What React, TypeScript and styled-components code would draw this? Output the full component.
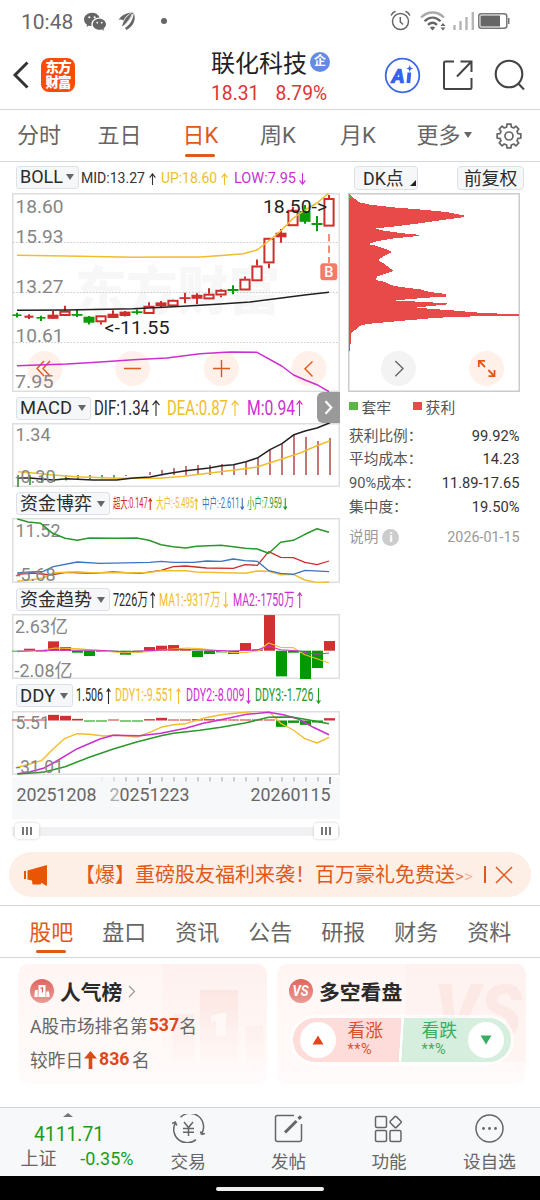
import React, { useLayoutEffect, useRef, useState } from 'react';
import styled, { createGlobalStyle, css } from 'styled-components';
import { BsWechat } from 'react-icons/bs';

const FONT = '"Roboto", "Noto Sans CJK SC", sans-serif';
const ORANGE = '#e0591a';
const RED = '#cf2e2e';
const GREEN = '#0a9a0a';
const YELLOW = '#f0bd2c';
const MAGENTA = '#cb2fd0';
const BLUE = '#3c74c0';
const INK = '#2a2a2a';

const Global = createGlobalStyle`
  * { box-sizing: border-box; }
  body { margin: 0; background: #fff; font-family: ${FONT}; color: #333; }
  svg { display: block; flex: none; }
`;

/* ---------- shared ---------- */

const FitBox = styled.span<{ $w: number }>`
  display: inline-block;
  flex: none;
  width: ${p => p.$w}px;
  white-space: nowrap;
`;
const FitInner = styled.span`
  display: inline-block;
  transform-origin: 0 50%;
`;

function Fit({ w, children }: { w: number; children: React.ReactNode }) {
  const ref = useRef<HTMLSpanElement>(null);
  const [k, setK] = useState(1);
  useLayoutEffect(() => {
    if (ref.current) setK(w / ref.current.getBoundingClientRect().width);
  }, []);
  return (
    <FitBox $w={w}>
      <FitInner ref={ref} style={{ transform: `scaleX(${k})` }}>{children}</FitInner>
    </FitBox>
  );
}

const Page = styled.div`
  width: 540px;
  height: 1200px;
  overflow: hidden;
  display: flex;
  flex-direction: column;
  background: #fff;
`;

/* ---------- status bar ---------- */

const StatusBar = styled.div`
  height: 41px;
  flex: none;
  display: flex;
  align-items: center;
  padding: 0 30px 0 21px;
  color: #666;
`;
const Clock = styled.span`
  font-size: 21px;
  line-height: 24px;
  margin: 3px 11px 0 0;
`;
const StatusIcons = styled.div`
  margin-left: auto;
  display: flex;
  align-items: center;
`;
const Dot = styled.span`
  width: 6px;
  height: 6px;
  border-radius: 50%;
  background: #666;
  margin-left: 25px;
`;

/* ---------- header ---------- */

const Header = styled.header`
  height: 69px;
  flex: none;
  display: flex;
  border-bottom: 1px solid #d3d6d8;
  padding-left: 12px;
`;
const HeaderLeft = styled.div`
  width: 199px;
  display: flex;
  align-items: center;
`;
const Logo = styled.div`
  width: 34px;
  height: 34px;
  margin-left: 12px;
  border-radius: 8px;
  background: #fb4b0a;
  color: #fff;
  font: 900 13.5px/15px ${FONT};
  display: flex;
  flex-direction: column;
  align-items: center;
  justify-content: center;
  letter-spacing: -1px;
`;
const TitleBlock = styled.div`
  width: 172px;
  padding-top: 3px;
`;
const TitleRow = styled.div`
  display: flex;
  align-items: center;
  height: 34px;
  font-size: 24px;
  color: #222;
`;
const CorpBadge = styled.span`
  width: 20px;
  height: 20px;
  border-radius: 50%;
  margin: 2px 0 0 3px;
  background: #648be3;
  color: #fff;
  font-size: 12px;
  font-weight: 700;
  line-height: 19px;
  text-align: center;
`;
const PriceRow = styled.div`
  display: flex;
  gap: 16px;
  font-size: 19.3px;
  line-height: 24px;
  color: #dc3535;
  margin-top: 4px;
`;
const HeaderActions = styled.div`
  display: flex;
  align-items: center;
`;
const Spacer = styled.span<{ $w: number }>`
  flex: none;
  width: ${p => p.$w}px;
`;

/* ---------- period tabs ---------- */

const PeriodTabs = styled.nav`
  height: 52px;
  flex: none;
  display: flex;
  border-bottom: 1px solid #d3d8da;
  padding-left: 17px;
`;
const underline = (gap: number) => css`
  &::after {
    content: '';
    display: block;
    width: 30px;
    height: 3px;
    border-radius: 2px;
    background: ${ORANGE};
    margin: ${gap}px auto 0;
  }
`;
const PeriodTab = styled.div<{ $w: number; $on?: boolean }>`
  width: ${p => p.$w}px;
  font-size: 22px;
  line-height: 30px;
  padding-top: 11px;
  color: ${p => (p.$on ? ORANGE : '#666')};
  & > span { display: inline-block; ${p => p.$on && underline(3)} }
`;
const Caret = styled.i`
  display: inline-block;
  border: 4px solid transparent;
  border-top: 6.5px solid #666;
  border-bottom: 0;
`;
const MoreCaret = styled(Caret)`
  margin-left: 3px;
  vertical-align: 5px;
`;
const SettingsTab = styled(PeriodTab)`
  padding-top: 12.5px;
`;

/* ---------- chart area ---------- */

const ChartArea = styled.main`
  display: flex;
  height: 690px;
  flex: none;
  padding-left: 12px;
`;
const LeftColumn = styled.section`
  width: 328px;
  position: relative;
`;
const IndicatorRow = styled.div<{ $h: number; $pad: number; $size: number }>`
  height: ${p => p.$h}px;
  padding: ${p => p.$pad}px 0 0 4px;
  display: flex;
  align-items: flex-start;
  font-size: ${p => p.$size}px;
  line-height: 23px;
  white-space: nowrap;
`;
const PickerBox = styled.div<{ $w: number }>`
  width: ${p => p.$w}px;
  height: 23px;
  flex: none;
  border: 1px solid #dde1e6;
  border-radius: 3px;
  background: #f6f7f9;
  color: #2c2c2c;
  font-size: 18px;
  line-height: 22px;
  padding: 0 4px 0 3px;
  display: flex;
  align-items: center;
  justify-content: space-between;
`;
const Reading = styled.span<{ $color: string; $ml: number; $drop: number }>`
  display: flex;
  align-items: center;
  flex: none;
  margin: ${p => p.$drop}px 0 0 ${p => p.$ml}px;
  color: ${p => p.$color};
`;
const PaneToggle = styled.button`
  position: absolute;
  left: 305px;
  top: 230px;
  width: 23px;
  height: 31px;
  border: 0;
  padding: 0;
  border-radius: 6px 0 0 6px;
  background: #999;
  display: flex;
  align-items: center;
  justify-content: center;
`;

type ReadingDef = { text: string; w: number; gap: number; color: string; up: boolean; aw: number; agap: number };

function Arrow({ w, h, up, color }: { w: number; h: number; up: boolean; color: string }) {
  const m = w / 2;
  const d = up ? `M${m} ${h}V.8M.6 ${m + 1.2}L${m} .8L${w - 0.6} ${m + 1.2}` : `M${m} 0V${h - 0.8}M.6 ${h - m - 1.2}L${m} ${h - 0.8}L${w - 0.6} ${h - m - 1.2}`;
  return (
    <svg width={w} height={h} fill="none" stroke={color} strokeWidth="1.1"><path d={d} /></svg>
  );
}

function Indicator(p: { name: string; boxW: number; nameW: number; h: number; pad: number; size: number; arrowH: number; drop?: number; items: ReadingDef[] }) {
  return (
    <IndicatorRow $h={p.h} $pad={p.pad} $size={p.size}>
      <PickerBox $w={p.boxW}><Fit w={p.nameW}>{p.name}</Fit><Caret /></PickerBox>
      {p.items.map(r => (
        <Reading key={r.text} $color={r.color} $ml={r.gap} $drop={p.drop ?? 0}>
          <Fit w={r.w}>{r.text}</Fit>
          <Spacer $w={r.agap} />
          <Arrow w={r.aw} h={p.arrowH} up={r.up} color={r.color} />
        </Reading>
      ))}
    </IndicatorRow>
  );
}

/* Series are stored at three units per pixel, measured from the panel's own origin row. */
const trace = (top: number, pts: number[][]) => pts.map(([x, y]) => `${(x / 3).toFixed(1)},${(top + y / 3).toFixed(1)}`).join(' ');

function Line({ top, pts, color, w = 1.3 }: { top: number; pts: number[][]; color: string; w?: number }) {
  return <polyline points={trace(top, pts)} fill="none" stroke={color} strokeWidth={w} strokeLinejoin="round" />;
}

function Frame({ y, h, children }: { y: number; h: number; children: React.ReactNode }) {
  return (
    <svg width="328" height={h} viewBox={`12 ${y} 328 ${h}`} fontFamily="Roboto, 'Noto Sans CJK SC', sans-serif">
      <rect x="12.75" y={y + 0.75} width="326.5" height={h - 1.5} fill="#fff" stroke="#dedede" strokeWidth="1.5" />
      {children}
    </svg>
  );
}

function Label({ x, y, w, size = 17.5, color = '#868686', children }: { x: number; y: number; w: number; size?: number; color?: string; children: string }) {
  return <text x={x} y={y} fontSize={size} fill={color} textLength={w} lengthAdjust="spacingAndGlyphs">{children}</text>;
}

/* kind: h = hollow red, f = filled red, g = green; body top, body bottom, wick top, wick bottom */
const candles: [string, number, number, number, number][] = [
  ['g', 314.4, 316, 312.8, 317.6], ['f', 315.6, 317.8, 314.2, 319], ['g', 317, 318.6, 315.8, 321],
  ['f', 314.7, 318.8, 311, 318.8], ['h', 310.7, 316, 305.7, 316], ['g', 314, 315.8, 309.3, 317],
  ['g', 316.7, 322.7, 316, 324.5], ['h', 315.3, 322.3, 315, 324.5], ['f', 313.7, 318, 310.3, 318],
  ['f', 311.6, 316, 311, 316.5], ['g', 311.3, 313, 309.5, 314.5], ['h', 305.7, 314, 302.3, 314],
  ['f', 302.4, 306.3, 301, 307.7], ['h', 299.8, 306.4, 299.5, 306.5], ['f', 297.2, 299, 292.7, 303.3],
  ['f', 294.8, 298.8, 293.3, 304], ['h', 293.7, 299.4, 288.3, 299.4], ['h', 289.8, 295.5, 289, 297.3],
  ['g', 289, 291, 285.3, 294.3], ['h', 278.7, 290.5, 276.5, 290.5], ['h', 265.5, 281.3, 259.5, 281.3],
  ['h', 237.8, 263.4, 237.8, 268.3], ['f', 232.7, 237.3, 229, 242.7], ['h', 209.8, 226.2, 207, 226.2],
  ['g', 211, 221.8, 205, 223.7], ['g', 223, 225, 216, 231.2], ['h', 198, 226.6, 195, 226.6],
];

function MainChart() {
  return (
    <Frame y={193} h={199}>
      <text x="75" y="310" fontSize="52" fontWeight="900" fill="#f7f7f7" textLength="205" lengthAdjust="spacingAndGlyphs">东方财富</text>
      <g stroke="#c9c9c9" strokeWidth="1" strokeDasharray="1.5 1.7">
        <path d="M13 242.5H339M13 292.5H339M13 342.5H339" />
      </g>
      <g fill="#fff0e9">
        {[44.7, 132.5, 221.3, 309].map(cx => <circle key={cx} cx={cx} cy="368.5" r="17.5" />)}
      </g>
      <g stroke={ORANGE} strokeWidth="1.4" fill="none">
        <path d="M44 361L37 368.5L44 376M50 361L43 368.5L50 376M124 368.5H141M213 368.5H230M221.5 360V377M312.5 361.5L305 368.8L312.5 376.5" />
      </g>
      <Label x={15.5} y={212.7} w={48} size={18.8}>18.60</Label>
      <Label x={15.5} y={242.7} w={48} size={18.8}>15.93</Label>
      <Label x={15.5} y={292.7} w={48} size={18.8}>13.27</Label>
      <Label x={15.5} y={342.2} w={48} size={18.8}>10.61</Label>
      <Label x={15} y={387.7} w={38.5} size={18.8}>7.95</Label>
      {candles.map(([k, t, b, wt, wb], i) => {
        const x = 17 + i * 12;
        const c = k === 'g' ? GREEN : RED;
        const bw = i < 3 ? 9 : 11;
        return (
          <g key={i}>
            {k === 'h' ? (
              <>
                <path d={`M${x} ${wt}V${t}M${x} ${b}V${wb}`} stroke={c} strokeWidth="2" />
                <rect x={x - 4.6} y={t + 1} width="9.2" height={b - t - 2} fill="#fff" stroke={c} strokeWidth="2" />
              </>
            ) : (
              <>
                <path d={`M${x} ${wt}V${wb}`} stroke={c} strokeWidth="2" />
                <rect x={x - bw / 2} y={t} width={bw} height={b - t} fill={c} />
              </>
            )}
          </g>
        );
      })}
      <Line top={160} color={YELLOW} w={1.5} pts={[[51, 286], [200, 288], [400, 292], [500, 291], [600, 291], [675, 286], [730, 281], [771, 270], [806, 243], [842, 213], [878, 176], [915, 150], [951, 129], [987, 99]]} />
      <Line top={270} color="#222" w={1.5} pts={[[51, 121], [200, 120], [400, 116], [550, 109], [650, 103], [750, 96], [850, 83], [920, 74], [987, 67]]} />
      <Line top={270} color={MAGENTA} w={1.5} pts={[[51, 287], [200, 282], [290, 277], [400, 269], [500, 264], [600, 251], [690, 246], [771, 247], [845, 288], [881, 315], [915, 330], [951, 344], [987, 365]]} />
      <Label x={263} y={212.7} w={64} size={19} color="#1f1f1f">{'18.50->'}</Label>
      <Label x={104.5} y={333.8} w={65} size={19} color="#1f1f1f">{'<-11.55'}</Label>
      <path d="M329 234V263" stroke="#f0705c" strokeWidth="1.6" strokeDasharray="7.5 4" />
      <rect x="320.3" y="263.3" width="17" height="17" rx="3" fill="#f37c69" />
      <text x="328.8" y="277" fontSize="14.5" fontWeight="500" fill="#fff" textAnchor="middle">B</text>
    </Frame>
  );
}

const macdBars: [number, number][] = [
  [18, 487], [30, 485], [42, 483], [54, 482], [66, 480.5], [78, 479.5], [90, 479], [102, 478.5], [114, 478], [126, 476],
  [150, 472], [162, 470], [174, 468], [186, 466], [198, 465], [210, 465], [222, 464], [234, 465], [246, 462], [258, 458],
  [270, 450], [282, 444], [294, 435], [306, 437], [318, 441], [330, 438],
];

function MacdChart() {
  return (
    <Frame y={423} h={64}>
      <Label x={15.5} y={440.8} w={35}>1.34</Label>
      {macdBars.map(([x, y]) => (
        <path key={x} d={`M${x} 475V${y}`} stroke={y > 475 ? '#3f9a3f' : '#b96060'} strokeWidth="1.7" />
      ))}
      <Line top={390} color={YELLOW} w={1.5} pts={[[54, 245], [100, 249], [160, 255], [230, 260], [350, 265], [480, 265], [550, 259], [630, 249], [705, 240], [771, 231], [845, 207], [900, 189], [951, 167], [990, 152]]} />
      <Line top={390} color="#222" w={1.5} pts={[[54, 264], [90, 264], [160, 270], [200, 266], [280, 270], [350, 270], [400, 264], [450, 261], [500, 251], [557, 242], [627, 234], [665, 227], [700, 224], [738, 215], [774, 203], [810, 179], [846, 161], [882, 134], [915, 123], [951, 114], [990, 98]]} />
      <Label x={15.5} y={482.5} w={40}>-0.30</Label>
    </Frame>
  );
}

function FlowChart() {
  return (
    <Frame y={518} h={65}>
      <Label x={15.5} y={537} w={45}>11.52</Label>
      <Line top={485} color={RED} pts={[[52, 268], [100, 264], [150, 270], [200, 262], [270, 265], [340, 261], [420, 265], [483, 256], [520, 245], [557, 243], [620, 249], [700, 250], [735, 239], [772, 241], [806, 200], [842, 217], [880, 218], [915, 232], [951, 239], [987, 228]]} />
      <Line top={485} color={YELLOW} w={1.5} pts={[[52, 289], [90, 285], [130, 278], [165, 263], [232, 260], [270, 263], [440, 263], [483, 257], [557, 257], [590, 261], [735, 265], [772, 258], [806, 259], [842, 269], [880, 268], [915, 285], [951, 293], [987, 291]]} />
      <Line top={485} color={BLUE} pts={[[52, 264], [90, 261], [130, 259], [160, 245], [232, 231], [300, 235], [450, 232], [483, 229], [520, 232], [580, 232], [620, 228], [663, 229], [700, 222], [735, 227], [772, 229], [806, 257], [842, 265], [880, 268], [915, 256], [987, 260]]} />
      <Line top={485} color="#2a972a" w={1.5} pts={[[52, 102], [85, 111], [122, 115], [158, 145], [195, 160], [232, 166], [268, 159], [345, 160], [410, 159], [447, 166], [483, 179], [520, 185], [557, 189], [590, 184], [663, 181], [700, 185], [735, 190], [772, 192], [806, 205], [842, 172], [880, 166], [915, 148], [951, 131], [987, 142]]} />
      <Label x={15.5} y={581} w={40}>-5.68</Label>
    </Frame>
  );
}

/* column height of each trading day, relative to the zero row, in thirds of a pixel */
const trendBars = [-2, 6, -2, 28, 11, -6, -16, -3, -3, -12, -5, 11, 15, 17, 5, -19, -10, -5, -10, 23, 4, 107, -77, -6, -85, -52, 29];
const ddyBars = [3, 3, 3, 17, 14, 5, -3, -3, 3, -3, -3, 4, 8, 3, 3, 4, 4, 3, 3, 3, 3, 3, -19, -7, -13, -6, 7];

function Bars({ zero, data }: { zero: number; data: number[] }) {
  return (
    <>
      {data.map((v, i) => {
        const h = Math.max(Math.abs(v) / 3, 0.8);
        return <rect key={i} x={12 + i * 12} y={v > 0 ? zero - h : zero} width="11" height={h} fill={v > 0 ? '#d13030' : '#009900'} />;
      })}
    </>
  );
}

function TrendChart() {
  return (
    <Frame y={614} h={65}>
      <Label x={15} y={633.2} w={53} size={18}>2.63亿</Label>
      <Label x={14.5} y={676.8} w={58} size={18}>-2.08亿</Label>
      <Bars zero={650.7} data={trendBars} />
      <Line top={580} color={YELLOW} w={1.2} pts={[[52, 215], [130, 210], [165, 204], [230, 206], [300, 212], [370, 218], [440, 215], [500, 209], [560, 204], [600, 206], [650, 212], [700, 218], [740, 217], [775, 212], [806, 189], [842, 202], [880, 203], [915, 224], [951, 236], [987, 249]]} />
      <Line top={580} color={MAGENTA} w={1.1} pts={[[52, 214], [180, 211], [300, 211], [370, 215], [540, 208], [700, 213], [770, 210], [806, 199], [842, 209], [900, 213], [925, 220], [951, 223], [987, 219]]} />
    </Frame>
  );
}

function DdyChart() {
  return (
    <Frame y={711} h={64}>
      <Bars zero={720.5} data={ddyBars} />
      <Line top={680} color={YELLOW} w={1.4} pts={[[52, 262], [90, 252], [124, 242], [160, 206], [195, 175], [232, 161], [268, 163], [310, 168], [350, 165], [410, 171], [447, 158], [483, 142], [520, 134], [557, 131], [610, 115], [663, 104], [720, 98], [770, 94], [806, 94], [842, 130], [880, 150], [915, 176], [951, 189], [987, 172]]} />
      <Line top={680} color={MAGENTA} w={1.5} pts={[[52, 281], [88, 276], [130, 265], [165, 246], [232, 206], [300, 177], [340, 166], [420, 167], [483, 160], [557, 145], [610, 130], [663, 119], [740, 103], [806, 97], [850, 104], [895, 117], [940, 142], [987, 164]]} />
      <Line top={680} color="#2a972a" w={1.5} pts={[[52, 282], [130, 277], [195, 260], [268, 232], [340, 207], [410, 186], [483, 167], [520, 160], [600, 151], [663, 142], [735, 129], [806, 112], [842, 111], [880, 112], [940, 122], [987, 131]]} />
      <Label x={15.5} y={729} w={34.5}>5.51</Label>
      <Label x={15.5} y={772.7} w={48}>-31.01</Label>
    </Frame>
  );
}

const Axis = styled.div`
  margin-top: 2px;
  height: 42px;
  background: #f7f8fa;
`;
const AxisDates = styled.div`
  display: flex;
  padding: 0 9.5px 0 4.5px;
  font-size: 17.8px;
  line-height: 20px;
  color: #666;
  & > :nth-child(2) { margin-left: 13px; }
  & > :nth-child(3) { margin-left: auto; }
  i { font-style: normal; color: #aaa; }
`;
const Slider = styled.div`
  height: 23px;
  display: flex;
  align-items: center;
  justify-content: space-between;
  padding: 0 2px 0 3px;
  background: linear-gradient(#f1f1f3, #f1f1f3) 0 8px / 100% 9px no-repeat;
`;
const Handle = styled.div`
  width: 24px;
  height: 16px;
  border-radius: 4px;
  background: #fff;
  box-shadow: 0 0 3px rgba(0, 0, 0, 0.2);
  display: flex;
  gap: 2.8px;
  align-items: center;
  justify-content: center;
  i { width: 1.2px; height: 8px; background: #777; }
`;

/* ---------- right column ---------- */

const RightColumn = styled.section`
  flex: 1;
  padding-left: 8px;
`;
const RightButtons = styled.div`
  height: 31px;
  padding: 3.5px 0 0 6px;
  display: flex;
  gap: 39px;
`;
const SmallButton = styled.div<{ $w: number; $pl: number }>`
  width: ${p => p.$w}px;
  height: 24px;
  padding-left: ${p => p.$pl}px;
  border: 1px solid #dde1e6;
  border-radius: 4px;
  background: #f6f7f9;
  color: #2c2c2c;
  font-size: 17.8px;
  line-height: 23px;
  display: flex;
  white-space: nowrap;
`;
const CornerMark = styled.i`
  align-self: flex-end;
  margin: 0 0 3px 6px;
  border-left: 6px solid transparent;
  border-bottom: 6px solid #222;
`;
const Legend = styled.div`
  display: flex;
  align-items: center;
  height: 28px;
  margin-bottom: 4.5px;
  font-size: 14.8px;
  color: #555;
  padding-left: 1px;
`;
const Swatch = styled.i<{ $c: string; $ml?: number }>`
  width: 8.5px;
  height: 8.5px;
  background: ${p => p.$c};
  margin: 0 4px 0 ${p => p.$ml ?? 0}px;
`;
const Stat = styled.div`
  display: flex;
  justify-content: space-between;
  width: 170.5px;
  height: 23.8px;
  margin-left: 1px;
  font-size: 14.7px;
  line-height: 23.8px;
  color: #555;
  b { font-weight: 400; color: #333; }
`;
const NoteRow = styled(Stat)`
  margin-top: 6px;
  color: #999;
  b { color: #999; font-size: 14.3px; }
  span { display: flex; align-items: center; gap: 4px; }
`;
const Info = styled.em`
  width: 17px;
  height: 17px;
  border-radius: 50%;
  background: #ccc;
  color: #fff;
  font: 700 13px/17px ${FONT};
  text-align: center;
`;

const chips = [
  [27, 102], [42, 115], [58, 127], [90, 134], [160, 142], [260, 150], [325, 157], [365, 165], [377, 168], [362, 173], [300, 181], [232, 191],
  [150, 201], [105, 205], [125, 211], [180, 219], [245, 225], [225, 229], [155, 236], [105, 245], [85, 252], [110, 258], [140, 268], [157, 276],
  [140, 284], [117, 297], [119, 303], [135, 313], [150, 325], [162, 333], [140, 340], [110, 350], [109, 360], [135, 366], [155, 376], [190, 382],
  [240, 388], [270, 396], [318, 402], [318, 410], [260, 413], [215, 417], [158, 421], [200, 423], [270, 427], [323, 430], [318, 434], [270, 438],
  [228, 443], [280, 447], [350, 452], [400, 457], [470, 460], [470, 462], [537, 462], [537, 467], [430, 468], [295, 473], [225, 479], [145, 486], [80, 492], [60, 497],
  [45, 510], [32, 522], [34, 545], [29, 560], [28, 588], [26, 590],
];

function ChipChart() {
  return (
    <svg width="172" height="199" viewBox="348 193 172 199">
      <rect x="348.75" y="193.75" width="170.5" height="197.5" fill="#fff" stroke="#cbcbcb" strokeWidth="1.5" />
      <polygon fill="#e84a49" shapeRendering="crispEdges" points={chips.map(([x, y]) => `${340 + x / 3},${160 + y / 3}`).join(' ')} />
      <path d="M349 194.5L352.8 198.3H349Z" fill="#61b34a" />
      <circle cx="398.4" cy="368.6" r="17.5" fill="#f3f3f3" />
      <path d="M395.3 361L403 368.6L395.3 376.3" fill="none" stroke="#666" strokeWidth="1.4" />
      <circle cx="486.6" cy="368.6" r="17.5" fill="#fff0e9" />
      <path d="M485 360.9H478.8V367M479 361L485 367M488.5 376.2H494.5V370M494.3 376L488.3 370" fill="none" stroke={ORANGE} strokeWidth="1.8" />
    </svg>
  );
}

/* ---------- banner ---------- */

const Banner = styled.div`
  height: 45px;
  flex: none;
  margin: 0 9px;
  border-radius: 23px;
  background: #fdeee6;
  color: ${ORANGE};
  display: flex;
  align-items: center;
  padding: 0 18px 0 14px;
`;
const BannerText = styled.div`
  flex: 1;
  margin-left: 27px;
  padding-top: 1px;
  font-size: 20px;
  line-height: 28px;
  white-space: nowrap;
  i { font-style: normal; font-size: 17px; opacity: 0.75; }
  i + i { opacity: 0.35; }
`;
const Rule = styled.i`
  width: 1.2px;
  height: 17px;
  background: ${ORANGE};
  margin: 0 9.5px 0 0;
`;

/* ---------- section tabs ---------- */

const SectionTabs = styled.nav`
  height: 53px;
  flex: none;
  margin-top: 8px;
  border-top: 1px solid #d3d6d8;
  border-bottom: 1px solid #d3d6d8;
  display: flex;
  padding-left: 14.8px;
`;
const SectionTab = styled.div<{ $on?: boolean }>`
  width: 73px;
  text-align: center;
  font-size: 22px;
  line-height: 30px;
  padding-top: 12px;
  color: ${p => (p.$on ? ORANGE : '#666')};
  ${p => p.$on && underline(2)}
`;

/* ---------- cards ---------- */

const Cards = styled.section`
  height: 149px;
  flex: none;
  display: flex;
  gap: 10px;
  padding: 6px 14px 0 18px;
`;
const Card = styled.article`
  width: 249px;
  height: 120px;
  border-radius: 10px;
  background: linear-gradient(#fff6f4, #fffbfa);
  padding: 11px 0 0 12px;
  position: relative;
  overflow: hidden;
`;
const Art = styled.div`
  position: absolute;
  right: 0;
  top: 0;
`;
const CardBody = styled.div`
  position: relative;
`;
const CardTitle = styled.h2`
  margin: 0;
  height: 32px;
  display: flex;
  align-items: center;
  gap: 6px;
  font-size: 20.8px;
  font-weight: 700;
  color: #2a2a2a;
`;
const CardLine = styled.p`
  margin: 0;
  height: 34px;
  display: flex;
  align-items: center;
  padding-top: 1px;
  font-size: 17.7px;
  color: #666;
  svg { margin-top: 2px; }
  b { color: #e0471a; font-weight: 700; margin-left: 1px; }
`;
const Vote = styled.div`
  width: 218px;
  height: 44px;
  margin: 11px 0 0 3.500px;
  border-radius: 22px;
  box-shadow: 0 0 0 3px rgba(255, 255, 255, 0.7);
  background: linear-gradient(93.5deg, #fddcd9 0 108px, #fff 108.5px 110.5px, #d6eedd 111px);
  display: flex;
  align-items: center;
  padding: 0 7px;
`;
const VoteDisc = styled.div`
  width: 36px;
  height: 36px;
  border-radius: 50%;
  background: #fff;
  display: flex;
  align-items: center;
  justify-content: center;
`;
const VoteText = styled.div<{ $c: string; $ml: number; $w: number }>`
  margin: -2px 0 0 ${p => p.$ml}px;
  width: ${p => p.$w}px;
  color: ${p => p.$c};
  font-size: 17.8px;
  line-height: 21px;
  small { display: block; font-size: 14.5px; line-height: 17px; letter-spacing: 0.5px; }
`;

/* ---------- bottom bar ---------- */

const BottomBar = styled.footer`
  height: 69px;
  flex: none;
  border-top: 1px solid #d3d6d8;
  background: #f7f8fa;
  display: flex;
`;
const IndexBox = styled.div`
  width: 138px;
  color: #189d18;
  display: flex;
  flex-direction: column;
`;
const IndexValue = styled.div`
  padding-left: 34px;
  font-size: 19.3px;
  line-height: 24px;
  margin-top: 5.5px;
`;
const IndexRow = styled.div`
  display: flex;
  justify-content: space-between;
  padding: 0 4.5px 0 20.5px;
  font-size: 18px;
  line-height: 24px;
  span { color: #666; }
`;
const UpCaret = styled.i`
  margin: 5px 0 0 63px;
  width: 0;
  border: 5.5px solid transparent;
  border-top: 0;
  border-bottom: 4px solid #777;
`;
const Action = styled.div`
  width: 100.4px;
  display: flex;
  flex-direction: column;
  align-items: center;
  padding-top: 6px;
  font-size: 17.6px;
  line-height: 24px;
  color: #666;
  svg { margin-bottom: 7px; }
`;
const SystemNav = styled.div`
  height: 24px;
  flex: none;
  background: #000;
  display: flex;
  justify-content: center;
  padding-top: 11px;
  &::after { content: ''; width: 108px; height: 4px; border-radius: 2px; background: #eee; }
`;

const periods: [string, number][] = [['分时', 80.5], ['五日', 85], ['日K', 77.5], ['周K', 80], ['月K', 76.5]];
const sections = ['股吧', '盘口', '资讯', '公告', '研报', '财务', '资料'];
const stats = [['获利比例：', '99.92%'], ['平均成本：', '14.23'], ['90%成本：', '11.89-17.65'], ['集中度：', '19.50%']];

const gear = (() => {
  const pts: string[] = [];
  for (let i = 0; i < 8; i++) {
    const a = (i * Math.PI) / 4;
    [[-0.25, 9.3], [-0.17, 12], [0.17, 12], [0.25, 9.3]].forEach(([d, r]) =>
      pts.push(`${(13 + r * Math.sin(a + d)).toFixed(2)},${(13 - r * Math.cos(a + d)).toFixed(2)}`));
  }
  return pts.join(' ');
})();

export default function App() {
  return (
    <Page>
      <Global />
      <StatusBar>
        <Clock>10:48</Clock>
        <BsWechat size={22} />
        <Spacer $w={12} />
        <svg width="18" height="20" viewBox="0 0 18 20" fill="#666">
          <path d="M.5 9C3 4.500 8 2 14 1.200C9.500 3.500 7 6 5.500 9.500C4 8.300 2.300 8.300 .5 9Z" />
          <path d="M4 15.500C5.500 9 9.500 3.800 15.300 1.300C13.500 6.500 10.500 12 4 15.500Z" />
          <path d="M7 17C12.500 13.500 15 8 15.800 2C18 8 16.500 14.500 8.500 19Z" />
          <path d="M7 13.500C10 10.500 12.500 7 14.200 3" stroke="#fff" strokeWidth=".8" fill="none" />
        </svg>
        <Dot />
        <StatusIcons>
          <svg width="21" height="21" viewBox="0 0 21 21" fill="none" stroke="#666" strokeWidth="1.5">
            <circle cx="10.500" cy="11.500" r="8" /><path d="M10.300 7V12L13 14.500M1 5.500C2 3.500 3.500 2 5.500 1.300M20 5.500C19 3.500 17.500 2 15.500 1.300" />
          </svg>
          <Spacer $w={9} />
          <svg width="26" height="20" viewBox="0 0 26 20" fill="none" stroke="#666" strokeWidth="2.300">
            <path d="M1 6.500C7.500 -.2 17.500 -.2 24 6.500" stroke="#aaa" />
            <path d="M4.500 10.200C9.500 5.300 15.500 5.300 20.500 10.200M8 13.800C11 11 14 11 17 13.800" />
            <path d="M9.800 16.500C11.500 15 13.500 15 15.200 16.500L12.500 19.500Z" fill="#666" stroke="none" />
            <path d="M20.500 15L23 12L25.500 15ZM20.500 16.500L23 19.500L25.500 16.500Z" fill="#666" stroke="none" />
          </svg>
          <Spacer $w={7} />
          <svg width="22" height="20" viewBox="0 0 22 20" stroke="#b5b5b5" strokeWidth="2.400">
            <path d="M1.500 19V14M7.500 19V10M13.500 19V6M19.800 19V1" />
          </svg>
          <Spacer $w={3} />
          <svg width="32" height="16" viewBox="0 0 32 16">
            <rect x=".8" y=".8" width="28" height="14.400" rx="2.500" fill="none" stroke="#777" strokeWidth="1.500" />
            <rect x="2.500" y="2.500" width="19.500" height="11" fill="#666" /><path d="M30 5H31.500V11H30Z" fill="#777" />
          </svg>
        </StatusIcons>
      </StatusBar>

      <Header>
        <HeaderLeft>
          <svg width="17" height="28" viewBox="0 0 17 28" fill="none" stroke="#333" strokeWidth="2.900"><path d="M15.500 1.500L3 14L15.500 26.500" /></svg>
          <Logo><span>东方</span><span>财富</span></Logo>
        </HeaderLeft>
        <TitleBlock>
          <TitleRow>联化科技<CorpBadge>企</CorpBadge></TitleRow>
          <PriceRow><span>18.31</span><span>8.79%</span></PriceRow>
        </TitleBlock>
        <HeaderActions>
          <Spacer $w={1} />
          <svg width="37" height="37" viewBox="0 0 37 37">
            <circle cx="18.500" cy="18.500" r="16.800" fill="#fff" stroke="#3b68e8" strokeWidth="1.800" />
            <text x="7.500" y="26" fontSize="20" fontWeight="900" fontStyle="italic" fontFamily="Roboto, sans-serif" fill="#3661ee" stroke="#3661ee" strokeWidth=".6">A</text>
            <path d="M23.500 15.500H27.200L26.300 26H22.500Z" fill="#3661ee" />
            <path d="M25.700 8L26.600 10.600L29 11.500L26.600 12.400L25.700 15L24.800 12.400L22.500 11.500L24.800 10.600Z" fill="#3661ee" />
          </svg>
          <Spacer $w={21} />
          <svg width="32" height="32" viewBox="0 0 32 32" fill="none" stroke="#444" strokeWidth="2">
            <path d="M12 2.500H3.500Q2 2.500 2 4V28.500Q2 30 3.500 30H28Q29.500 30 29.500 28.500V19" /><path d="M18.500 2.500H29.500V13M29 3L15 17.500" />
          </svg>
          <Spacer $w={20} />
          <svg width="32" height="32" viewBox="0 0 32 32" fill="none" stroke="#444" strokeWidth="2.100">
            <circle cx="15" cy="15" r="13.300" /><path d="M24.300 24.500L30 30.500" />
          </svg>
        </HeaderActions>
      </Header>

      <PeriodTabs>
        {periods.map(([t, w]) => <PeriodTab key={t} $w={w} $on={t === '日K'}><span>{t}</span></PeriodTab>)}
        <PeriodTab $w={79.5}><span>更多</span><MoreCaret /></PeriodTab>
        <SettingsTab $w={30}>
          <svg width="26" height="26" viewBox="0 0 26 26" fill="none" stroke="#666" strokeWidth="1.700" strokeLinejoin="round">
            <polygon points={gear} /><circle cx="13" cy="13" r="4" />
          </svg>
        </SettingsTab>
      </PeriodTabs>

      <ChartArea>
        <LeftColumn>
          <Indicator name="BOLL" boxW={63} nameW={43} h={31} pad={3.5} size={14} arrowH={12} drop={1.500} items={[
            { text: 'MID:13.27', w: 64, gap: 2, color: '#333', up: true, aw: 7, agap: 3.5 },
            { text: 'UP:18.60', w: 56, gap: 5.5, color: YELLOW, up: true, aw: 7, agap: 4 },
            { text: 'LOW:7.95', w: 62, gap: 5.5, color: MAGENTA, up: false, aw: 7, agap: 3.5 },
          ]} />
          <MainChart />
          <Indicator name="MACD" boxW={75} nameW={52} h={31} pad={4.500} size={20} arrowH={16} items={[
            { text: 'DIF:1.34', w: 55, gap: 3, color: INK, up: true, aw: 8, agap: 2.5 },
            { text: 'DEA:0.87', w: 61, gap: 7, color: YELLOW, up: true, aw: 8, agap: 3 },
            { text: 'M:0.94', w: 48, gap: 8, color: MAGENTA, up: true, aw: 7, agap: 1 },
          ]} />
          <MacdChart />
          <Indicator name="资金博弈" boxW={94} nameW={72} h={31} pad={5} size={14} arrowH={12} items={[
            { text: '超大:0.147', w: 34.5, gap: 2.5, color: RED, up: true, aw: 4.5, agap: 0.5 },
            { text: '大户:-5.495', w: 38, gap: 3.5, color: YELLOW, up: true, aw: 4.5, agap: 0.5 },
            { text: '中户:-2.611', w: 37.500, gap: 3, color: BLUE, up: false, aw: 4.5, agap: 0.5 },
            { text: '小户:7.959', w: 35, gap: 3, color: '#2a972a', up: false, aw: 4.5, agap: 0.5 },
          ]} />
          <FlowChart />
          <Indicator name="资金趋势" boxW={94} nameW={72} h={31} pad={5} size={18} arrowH={16} items={[
            { text: '7226万', w: 35, gap: 2.5, color: INK, up: true, aw: 5.5, agap: 2 },
            { text: 'MA1:-9317万', w: 61.5, gap: 4, color: YELLOW, up: false, aw: 5.5, agap: 2.5 },
            { text: 'MA2:-1750万', w: 61.5, gap: 4, color: MAGENTA, up: true, aw: 5.5, agap: 3 },
          ]} />
          <TrendChart />
          <Indicator name="DDY" boxW={57} nameW={35} h={32} pad={5} size={18.500} arrowH={16} items={[
            { text: '1.506', w: 27, gap: 3, color: INK, up: true, aw: 5, agap: 3 },
            { text: 'DDY1:-9.551', w: 58.5, gap: 4, color: YELLOW, up: true, aw: 5, agap: 2.500 },
            { text: 'DDY2:-8.009', w: 58.5, gap: 4.500, color: MAGENTA, up: false, aw: 5, agap: 2 },
            { text: 'DDY3:-1.726', w: 58.5, gap: 4, color: '#1f971f', up: false, aw: 5, agap: 2 },
          ]} />
          <DdyChart />
          <Axis>
            <svg width="328" height="8" viewBox="12 0 328 8">
              {Array.from({ length: 20 }, (_, i) => {
                const big = i === 4 || i === 19;
                return <path key={i} d={`M${102 + i * 12} 0V${big ? 7 : 4.500}`} stroke={big ? '#888' : i === 0 ? '#e6e6e6' : i === 1 ? '#d2d2d2' : '#bbb'} strokeWidth={big ? 1.8 : 1.3} />;
              })}
            </svg>
            <AxisDates><span>20251208</span><span><i>2</i>0251223</span><span>20260115</span></AxisDates>
          </Axis>
          <Slider>
            <Handle><i /><i /><i /></Handle>
            <Handle><i /><i /><i /></Handle>
          </Slider>
          <PaneToggle>
            <svg width="9" height="15" viewBox="0 0 9 15" fill="none" stroke="#fff" strokeWidth="2.200"><path d="M1.500 1.200L7.300 7.500L1.500 13.800" /></svg>
          </PaneToggle>
        </LeftColumn>

        <RightColumn>
          <RightButtons>
            <SmallButton $w={64} $pl={8}>DK点<CornerMark /></SmallButton>
            <SmallButton $w={67} $pl={6}>前复权</SmallButton>
          </RightButtons>
          <ChipChart />
          <Legend>
            <Swatch $c="#5bb648" />套牢<Swatch $c="#e84a49" $ml={22} />获利
          </Legend>
          {stats.map(([k, v]) => <Stat key={k}><span>{k}</span><b>{v}</b></Stat>)}
          <NoteRow><span>说明<Info>i</Info></span><b>2026-01-15</b></NoteRow>
        </RightColumn>
      </ChartArea>

      <Banner>
        <svg width="25" height="22" viewBox="0 0 25 22" fill="#ea5504">
          <path d="M1 7H3V15H1ZM4.500 6.500L24 1V21.500H22.500L18.500 18.800L17.500 20.500H9.500L9 16.500L4.500 15.500Z" />
        </svg>
        <BannerText>【爆】重磅股友福利来袭！百万豪礼免费送<i>&gt;</i><i>&gt;</i></BannerText>
        <Rule />
        <svg width="18" height="18" viewBox="0 0 18 18" fill="none" stroke={ORANGE} strokeWidth="1.500"><path d="M1 1L17 17M17 1L1 17" /></svg>
      </Banner>

      <SectionTabs>
        {sections.map((t, i) => <SectionTab key={t} $on={i === 0}>{t}</SectionTab>)}
      </SectionTabs>

      <Cards>
        <Card>
          <Art>
            <svg width="125" height="120" viewBox="142 964 125 120">
              <defs>
                <linearGradient id="podium" x1="0" x2="0" y1="0" y2="1"><stop offset="0" stopColor="#fce6e3" /><stop offset="1" stopColor="#fff8f6" /></linearGradient>
              </defs>
              <rect x="162" y="964" width="105" height="98" fill="url(#podium)" opacity=".35" />
              <path d="M200 990H238V1062H200ZM174 1014H194V1062H172ZM246 1026H263L265 1062H246Z" fill="url(#podium)" />
              <path d="M211 1016L221 1013H226V1036H216V1021L211 1022Z" fill="#fff8f6" />
            </svg>
          </Art>
          <CardBody>
            <CardTitle>
              <svg width="24" height="24" viewBox="0 0 24 24">
                <defs><linearGradient id="disc" x1="0" x2="0" y1="0" y2="1"><stop offset="0" stopColor="#e0655e" /><stop offset="1" stopColor="#eb9b95" /></linearGradient></defs>
                <circle cx="12" cy="12" r="12" fill="url(#disc)" />
                <path d="M8.500 6H15.500V18H8.500ZM5 11H7.700V18H4.300ZM16.300 12.500H19L19.700 18H16.300Z" fill="#fff" />
                <path d="M10.500 9.500L12.500 8.700V13.500" fill="none" stroke="#e0655e" strokeWidth="1.300" />
              </svg>
              人气榜
              <svg width="8" height="13" viewBox="0 0 8 13" fill="none" stroke="#999" strokeWidth="1.200"><path d="M1 1L6.500 6.500L1 12" /></svg>
            </CardTitle>
            <CardLine>A股市场排名第<b>537</b>名</CardLine>
            <CardLine>
              较昨日
              <svg width="15" height="18" viewBox="0 0 15 18" fill="#e0471a"><path d="M7.500 0L14 7.500H9.300V18H5.700V7.500H1Z" /></svg>
              <b>836</b><Spacer $w={2.500} />名
            </CardLine>
          </CardBody>
        </Card>
        <Card>
          <Art>
            <svg width="125" height="120" viewBox="401 964 125 120">
              <rect x="406" y="964" width="120" height="98" fill="#fdeeec" opacity=".45" />
              <text x="434" y="1037" fontSize="74" fontWeight="900" fontStyle="italic" fontFamily="Roboto, sans-serif" fill="#fce9e6" textLength="88" lengthAdjust="spacingAndGlyphs">VS</text>
            </svg>
          </Art>
          <CardBody>
            <CardTitle>
              <svg width="24" height="24" viewBox="0 0 24 24">
                <circle cx="12" cy="12" r="12" fill="url(#disc)" />
                <text x="3.500" y="17" fontSize="14" fontWeight="700" fontStyle="italic" fontFamily="Roboto, sans-serif" fill="#fff" textLength="16" lengthAdjust="spacingAndGlyphs">VS</text>
              </svg>
              多空看盘
            </CardTitle>
            <Vote>
              <VoteDisc><svg width="12" height="10" viewBox="0 0 12 10" fill="#e0471a"><path d="M6 .5L11.500 9.500H.5Z" /></svg></VoteDisc>
              <VoteText $c="#e0502a" $ml={12} $w={74}>看涨<small>**%</small></VoteText>
              <VoteText $c="#3aad62" $ml={0} $w={46}>看跌<small>**%</small></VoteText>
              <VoteDisc><svg width="12" height="10" viewBox="0 0 12 10" fill="#3aad62"><path d="M.5 .5H11.500L6 9.500Z" /></svg></VoteDisc>
            </Vote>
          </CardBody>
        </Card>
      </Cards>

      <BottomBar>
        <IndexBox>
          <UpCaret />
          <IndexValue>4111.71</IndexValue>
          <IndexRow><span>上证</span>-0.35%</IndexRow>
        </IndexBox>
        <Action>
          <svg width="33" height="29" viewBox="0 0 33 29" fill="none" stroke="#666" strokeWidth="1.500">
            <path d="M8.500 3.300A13.500 13.500 0 0 1 29.500 20M29.500 20.500L33 19.500M29.500 20.500L28.500 17.500M24 25.600A13.500 13.500 0 0 1 3.300 9M0 9.500L3.300 8L4.800 11.500" />
            <path d="M12 8L16.500 13.500L21 8M16.500 13.500V22M11 14.500H22M11 18.200H22" />
          </svg>
          交易
        </Action>
        <Action>
          <svg width="29" height="29" viewBox="0 0 29 29" fill="none" stroke="#666" strokeWidth="1.500">
            <path d="M20 1.500H3.500Q1.500 1.500 1.500 3.500V25.500Q1.500 27.500 3.500 27.500H25.500Q27.500 27.500 27.500 25.500V10" />
            <path d="M11 18.500L22.500 7" strokeWidth="3" /><path d="M24.500 4.800L27 2.300" strokeWidth="3.200" />
          </svg>
          发帖
        </Action>
        <Action>
          <svg width="29" height="29" viewBox="0 0 29 29" fill="none" stroke="#666" strokeWidth="1.500">
            <rect x="1.500" y="2.500" width="11" height="11" rx="1.500" /><rect x="1.500" y="16.500" width="11" height="11" rx="1.500" /><rect x="16" y="16.500" width="11" height="11" rx="1.500" />
            <rect x="17.300" y="3.700" width="8.600" height="8.600" rx="1" transform="rotate(45 21.600 8)" />
          </svg>
          功能
        </Action>
        <Action>
          <svg width="29" height="29" viewBox="0 0 29 29" fill="#666">
            <circle cx="14.500" cy="14.500" r="13.500" fill="none" stroke="#666" strokeWidth="1.500" />
            <circle cx="8.500" cy="14.500" r="1.400" /><circle cx="14.500" cy="14.500" r="1.400" /><circle cx="20.500" cy="14.500" r="1.400" />
          </svg>
          设自选
        </Action>
      </BottomBar>
      <SystemNav />
    </Page>
  );
}
